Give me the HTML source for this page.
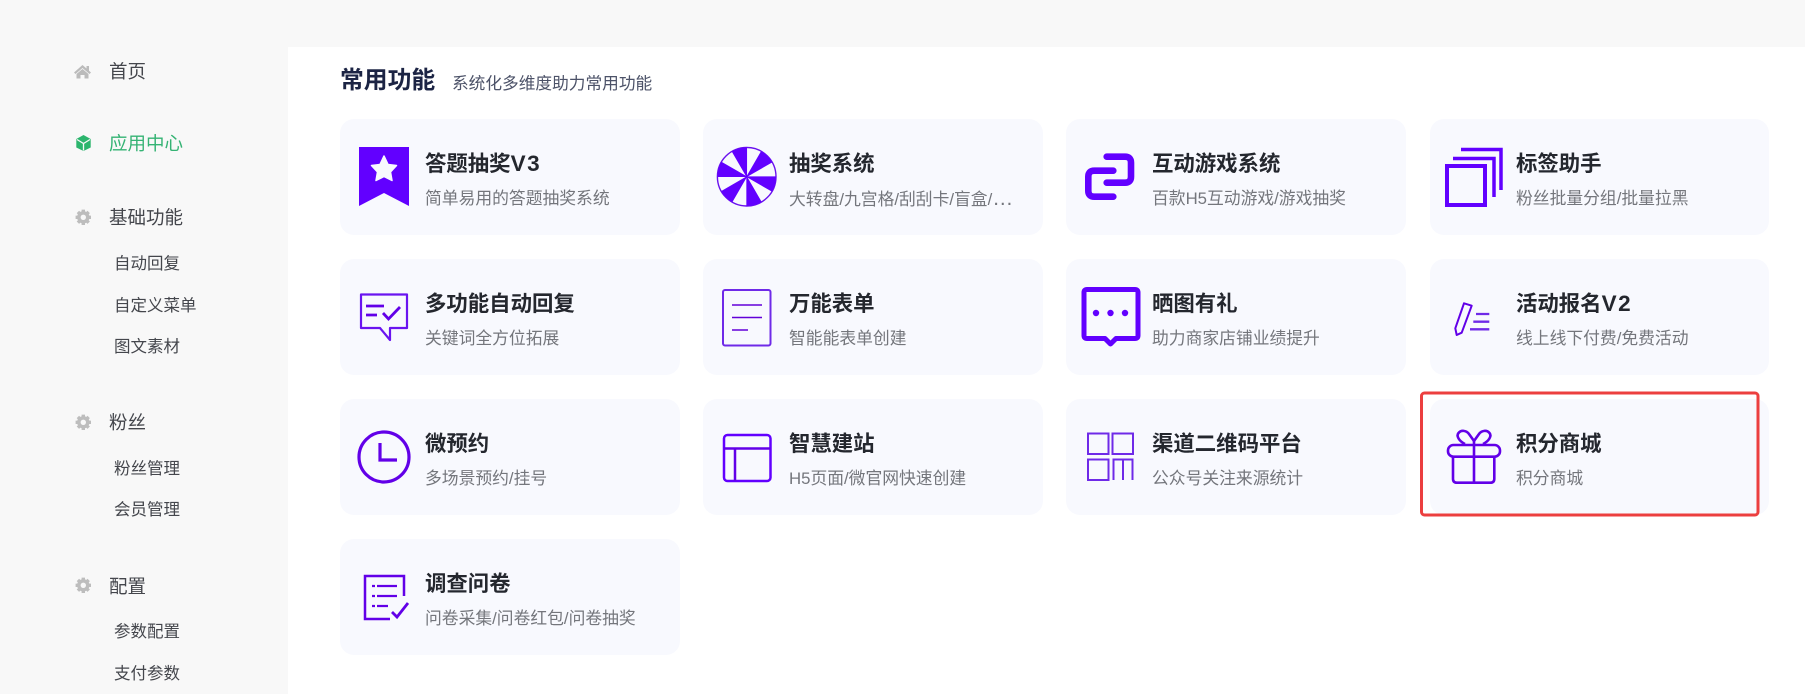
<!DOCTYPE html>
<html lang="zh-CN">
<head>
<meta charset="utf-8">
<title>常用功能</title>
<style>
html,body{margin:0;padding:0}
body{width:1805px;height:694px;overflow:hidden;background:#f8f8f8;position:relative;font-family:"Liberation Sans","Noto Sans CJK SC",sans-serif}
#main{position:absolute;left:288px;top:47px;width:1517px;height:647px;background:#fff}
.card{position:absolute;width:340px;height:116px;background:#f8f9fe;border-radius:14px}
.t{position:absolute;height:24px;line-height:24px;white-space:nowrap}
.m{font-size:18.5px;color:#44464c}
.s{font-size:16.5px;color:#44464c}
.h{font-size:21.4px;font-weight:700;color:#24272e}
.h span{font-size:22.5px;letter-spacing:1.6px}
.d{font-size:16.8px;color:#74767c}
svg{position:absolute;left:0;top:0}
</style>
</head>
<body>
<div id="main"></div>

<div class="card" style="left:340px;top:119px"></div>
<div class="card" style="left:703px;top:119px"></div>
<div class="card" style="left:1066px;top:119px"></div>
<div class="card" style="left:1430px;top:119px;width:338.5px"></div>
<div class="card" style="left:340px;top:259px"></div>
<div class="card" style="left:703px;top:259px"></div>
<div class="card" style="left:1066px;top:259px"></div>
<div class="card" style="left:1430px;top:259px;width:338.5px"></div>
<div class="card" style="left:340px;top:399px"></div>
<div class="card" style="left:703px;top:399px"></div>
<div class="card" style="left:1066px;top:399px"></div>
<div class="card" style="left:1430px;top:399px;width:338.5px"></div>
<div class="card" style="left:340px;top:539px"></div>

<div class="t m" style="left:109px;top:60px">首页</div>
<div class="t m" style="left:109px;top:132px;color:#35b374">应用中心</div>
<div class="t m" style="left:109px;top:206px">基础功能</div>
<div class="t s" style="left:114px;top:252px">自动回复</div>
<div class="t s" style="left:114px;top:294px">自定义菜单</div>
<div class="t s" style="left:114px;top:335px">图文素材</div>
<div class="t m" style="left:109px;top:411px">粉丝</div>
<div class="t s" style="left:114px;top:457px">粉丝管理</div>
<div class="t s" style="left:114px;top:498px">会员管理</div>
<div class="t m" style="left:109px;top:575px">配置</div>
<div class="t s" style="left:114px;top:620px">参数配置</div>
<div class="t s" style="left:114px;top:662px">支付参数</div>

<div class="t" style="left:340px;top:69px;font-size:23.8px;font-weight:700;color:#1c2444">常用功能</div>
<div class="t" style="left:452px;top:72px;font-size:16.7px;color:#4c5268">系统化多维度助力常用功能</div>

<div class="t h" style="left:425px;top:152px">答题抽奖<span>V3</span></div>
<div class="t d" style="left:425px;top:187px">简单易用的答题抽奖系统</div>
<div class="t h" style="left:789px;top:152px">抽奖系统</div>
<div class="t d" style="left:789px;top:187px">大转盘/九宫格/刮刮卡/盲盒/<span style="font-size:21px">…</span></div>
<div class="t h" style="left:1152px;top:152px">互动游戏系统</div>
<div class="t d" style="left:1152px;top:187px">百款H5互动游戏/游戏抽奖</div>
<div class="t h" style="left:1516px;top:152px">标签助手</div>
<div class="t d" style="left:1516px;top:187px">粉丝批量分组/批量拉黑</div>

<div class="t h" style="left:425px;top:292px">多功能自动回复</div>
<div class="t d" style="left:425px;top:327px">关键词全方位拓展</div>
<div class="t h" style="left:789px;top:292px">万能表单</div>
<div class="t d" style="left:789px;top:327px">智能能表单创建</div>
<div class="t h" style="left:1152px;top:292px">晒图有礼</div>
<div class="t d" style="left:1152px;top:327px">助力商家店铺业绩提升</div>
<div class="t h" style="left:1516px;top:292px">活动报名<span>V2</span></div>
<div class="t d" style="left:1516px;top:327px">线上线下付费/免费活动</div>

<div class="t h" style="left:425px;top:432px">微预约</div>
<div class="t d" style="left:425px;top:467px">多场景预约/挂号</div>
<div class="t h" style="left:789px;top:432px">智慧建站</div>
<div class="t d" style="left:789px;top:467px">H5页面/微官网快速创建</div>
<div class="t h" style="left:1152px;top:432px">渠道二维码平台</div>
<div class="t d" style="left:1152px;top:467px">公众号关注来源统计</div>
<div class="t h" style="left:1516px;top:432px">积分商城</div>
<div class="t d" style="left:1516px;top:467px">积分商城</div>

<div class="t h" style="left:425px;top:572px">调查问卷</div>
<div class="t d" style="left:425px;top:607px">问卷采集/问卷红包/问卷抽奖</div>

<svg width="1805" height="694" viewBox="0 0 1805 694" fill="none">
  <!-- sidebar icons -->
  <path d="M82.500 65 L74 72.500 L75.500 74 L82.500 68 L89.500 74 L91 72.500 L89 70.700 V66 H86.500 V68.500 Z" fill="#bbb"/>
  <path d="M76.500 74 L82.500 69 L88.500 74 V78.500 H84.500 V75 H80.500 V78.500 H76.500 Z" fill="#bbb"/>
  <path d="M83.500 135 L90.700 139 V147.500 L83.500 151 L76.300 147.500 V139 Z" fill="#2cb56d"/>
  <path d="M77 139.500 L83.500 143.500 L90 139.500 M83.500 143.500 V150.500" stroke="#f8f8f8" stroke-width="1.300"/>

  <g stroke="#bdbdbd" stroke-width="3.400">
    <circle cx="83.300" cy="217.300" r="6.200" fill="#bdbdbd" stroke="none"/>
    <path d="M83.300 209.600 V225 M75.600 217.300 H91 M77.900 211.900 L88.700 222.700 M77.900 222.700 L88.700 211.900"/>
    <circle cx="83.300" cy="422.300" r="6.200" fill="#bdbdbd" stroke="none"/>
    <path d="M83.300 414.600 V430 M75.600 422.300 H91 M77.900 416.900 L88.700 427.700 M77.900 427.700 L88.700 416.900"/>
    <circle cx="83.300" cy="585.300" r="6.200" fill="#bdbdbd" stroke="none"/>
    <path d="M83.300 577.600 V593 M75.600 585.300 H91 M77.900 579.900 L88.700 590.700 M77.900 590.700 L88.700 579.900"/>
  </g>
  <circle cx="83.300" cy="217.300" r="2.700" fill="#f8f8f8"/>
  <circle cx="83.300" cy="422.300" r="2.700" fill="#f8f8f8"/>
  <circle cx="83.300" cy="585.300" r="2.700" fill="#f8f8f8"/>

  <!-- bookmark -->
  <path d="M359 147 H409 V206 L384 193 L359 206 Z" fill="#6200ff"/>
  <path d="M384 156 L388 164.500 L396.500 165.500 L390.500 172 L392 180.500 L384 176.500 L376 180.500 L377.500 172 L371.500 165.500 L380 164.500 Z" fill="#f8f9fe" stroke="#f8f9fe" stroke-width="1.500" stroke-linejoin="round"/>

  <!-- wheel -->
  <circle cx="746.700" cy="176.700" r="29.300" fill="#f8f9fe" stroke="#6a10ee" stroke-width="1.400"/>
  <g fill="#6200ff" stroke="#6200ff" stroke-width="0.700" transform="translate(-0.300,-0.300)">
    <path d="M747 177 L761.500 151.900 A29 29 0 0 1 772.100 162.500 Z"/>
    <path d="M747 177 L776 177 A29 29 0 0 1 772.100 191.500 Z"/>
    <path d="M747 177 L761.500 202.100 A29 29 0 0 1 747 206 Z"/>
    <path d="M747 177 L732.500 202.100 A29 29 0 0 1 721.900 191.500 Z"/>
    <path d="M747 177 L718 177 A29 29 0 0 1 721.900 162.500 Z"/>
    <path d="M747 177 L732.500 151.900 A29 29 0 0 1 747 148 Z"/>
  </g>

  <!-- chain -->
  <path d="M1106.700 156.700 H1125 Q1131 156.700 1131 162.700 V176.700 Q1131 182.700 1125 182.700 H1106.700" stroke="#6200ff" stroke-width="6.600" stroke-linecap="round"/>
  <path d="M1113.300 170.700 H1094.300 Q1088.300 170.700 1088.300 176.700 V190.700 Q1088.300 196.700 1094.300 196.700 H1113.300" stroke="#6200ff" stroke-width="6.600" stroke-linecap="round"/>

  <!-- stack -->
  <rect x="1447" y="166" width="38" height="39" stroke="#6200ff" stroke-width="4"/>
  <path d="M1453 158.500 H1494 V197" stroke="#6200ff" stroke-width="3.500"/>
  <path d="M1461 149.500 H1501 V190" stroke="#6200ff" stroke-width="3.500"/>

  <!-- chat check -->
  <path d="M361 294.500 H407 V328 H390 V340 L380 328 H361 Z" stroke="#6a14f0" stroke-width="2.200" stroke-linejoin="round"/>
  <path d="M366 306 H384 M366 315 H377" stroke="#6200e8" stroke-width="2.800"/>
  <path d="M383 313 L388.500 319 L400 307" stroke="#6200e8" stroke-width="2.800"/>

  <!-- form -->
  <rect x="723" y="290" width="47.500" height="55.500" rx="2" stroke="#6f2ae8" stroke-width="2"/>
  <path d="M732 305 H762 M732 317.500 H762 M732 330 H748" stroke="#6200d8" stroke-width="1.500"/>

  <!-- bubble dots -->
  <path d="M1087 289.500 H1135 Q1138 289.500 1138 292.500 V335.500 Q1138 338.500 1135 338.500 H1116 L1110.500 344 L1105 338.500 H1087 Q1084 338.500 1084 335.500 V292.500 Q1084 289.500 1087 289.500 Z" stroke="#6200ff" stroke-width="5" stroke-linejoin="round"/>
  <circle cx="1096" cy="313" r="3.200" fill="#6200ff"/>
  <circle cx="1110.500" cy="313" r="3.200" fill="#6200ff"/>
  <circle cx="1125" cy="313" r="3.200" fill="#6200ff"/>

  <!-- pen -->
  <path d="M1464 303.300 L1471.700 305.700 L1461.700 332.700 L1456.700 335 L1455.300 328.300 Z" stroke="#6200e8" stroke-width="2" stroke-linejoin="round"/>
  <path d="M1476 314 H1489.300 M1473.300 321.700 H1489.300 M1470 329.300 H1489.300" stroke="#6f2ae8" stroke-width="2.300"/>

  <!-- clock -->
  <circle cx="384" cy="457" r="25" stroke="#6200e8" stroke-width="3.200"/>
  <path d="M380 443 V460 H397" stroke="#6200e8" stroke-width="3.200"/>

  <!-- layout -->
  <rect x="724" y="435" width="46.500" height="46" rx="3.500" stroke="#6200ff" stroke-width="2.500"/>
  <path d="M724 448.500 H770.500 M735 448.500 V481" stroke="#6200e8" stroke-width="2.500"/>

  <!-- grid -->
  <path d="M1088 433.500 H1108.500 V454 H1088 Z M1112.500 433.500 H1133 V454 H1112.500 Z M1088 459.500 H1108.500 V480 H1088 Z" stroke="#6f2ae8" stroke-width="2"/>
  <path d="M1112.500 459.500 H1133.500 M1113.500 459.500 V480 M1123 459.500 V480 M1132.500 459.500 V480" stroke="#6f2ae8" stroke-width="2"/>

  <!-- gift -->
  <rect x="1448" y="445" width="52" height="11.700" rx="5.500" stroke="#6200e8" stroke-width="2.600"/>
  <path d="M1453 456.700 V478.700 Q1453 482.700 1457 482.700 H1490.300 Q1494.300 482.700 1494.300 478.700 V456.700 M1474 441 V482.700" stroke="#6200e8" stroke-width="2.600"/>
  <path d="M1465 444 C1459 441 1456 436 1458.500 433 C1461 430 1466 430 1469 434 L1474 441 L1479 434 C1482 430 1487 430 1489.500 433 C1492 436 1489 441 1483 444" stroke="#6200e8" stroke-width="2.600" stroke-linejoin="round"/>

  <!-- survey -->
  <path d="M404 596 V576 H365 V619 H390" stroke="#6200e8" stroke-width="2.500"/>
  <path d="M377 586 H397 M377 596 H397 M377 606 H388" stroke="#6200e8" stroke-width="2.200"/>
  <path d="M372 586 H375 M372 596 H375 M372 606 H375" stroke="#6200e8" stroke-width="2.200"/>
  <path d="M392 612 L397 617 L408 603" stroke="#6200e8" stroke-width="2.800"/>

  <!-- red highlight -->
  <rect x="1421.500" y="393" width="336.500" height="122" rx="3" stroke="#ec3f3f" stroke-width="3"/>
</svg>
</body>
</html>
